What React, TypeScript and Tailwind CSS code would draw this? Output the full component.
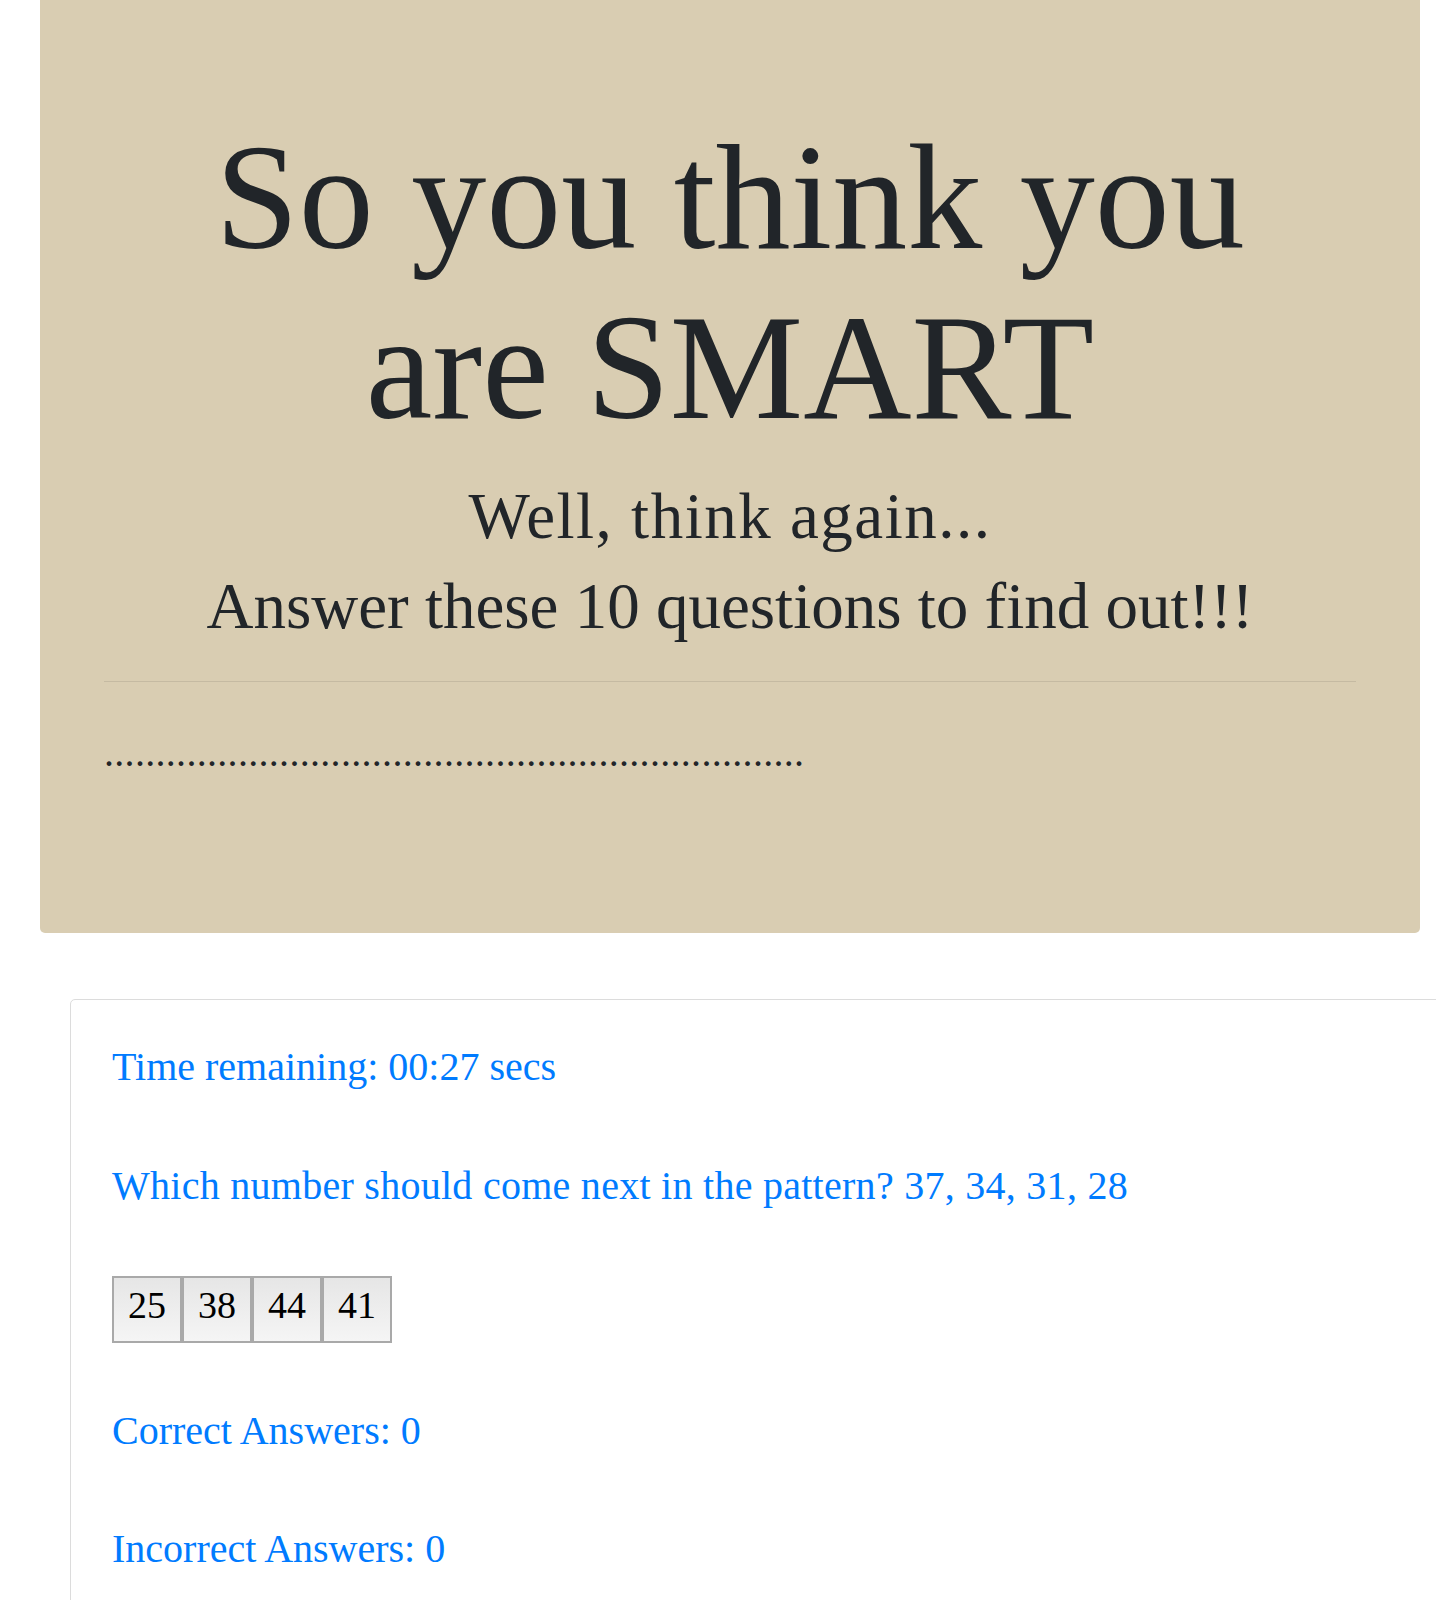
const serif = { fontFamily: '"Liberation Serif", "Times New Roman", serif' };

const choices = ["25", "38", "44", "41"];

function Hero() {
  return (
    <div className="ml-[40px] mr-[16px] rounded-b-[5px] bg-[#d9cdb2] px-[64px] pt-[112px] pb-[150px] text-[#212529]">
      <h1 className="text-center text-[150px] leading-[170px] font-normal">
        So you think you
        <br />
        are SMART
      </h1>
      <div className="mt-[19px] text-center text-[65px] leading-[90px]">
        <p className="tracking-[1.5px]">Well, think again...</p>
        <p>Answer these 10 questions to find out!!!</p>
      </div>
      <hr className="mt-[30px] border-t border-[#c5baa2]" />
      <p className="mt-[41px] text-[40px] leading-[60px] tracking-[0.3px]">
        {".".repeat(68)}
      </p>
    </div>
  );
}

function QuizCard() {
  return (
    <div className="mt-[66px] ml-[70px] w-[1420px] rounded-[5px] border border-[#dcdcdc] pt-[37px] pb-[80px] pl-[41px] text-[40px] leading-[60px] text-[#007bff]">
      <p>Time remaining: 00:27 secs</p>
      <p className="mt-[59px] tracking-[0.27px]">
        Which number should come next in the pattern? 37, 34, 31, 28
      </p>
      <div className="mt-[60px] flex">
        {choices.map((c) => (
          <button
            key={c}
            className="h-[67px] border-2 border-[#a9a9a9] bg-linear-to-b from-[#e6e6e6] to-[#f5f5f5] px-[14px] pt-[4px] pb-[12px] text-[38px] leading-[47px] text-black"
            style={serif}
          >
            {c}
          </button>
        ))}
      </div>
      <p className="mt-[58px]">Correct Answers: 0</p>
      <p className="mt-[58px]">Incorrect Answers: 0</p>
    </div>
  );
}

export default function App() {
  return (
    <div className="min-h-[1600px] overflow-x-hidden bg-white" style={serif}>
      <Hero />
      <QuizCard />
    </div>
  );
}
